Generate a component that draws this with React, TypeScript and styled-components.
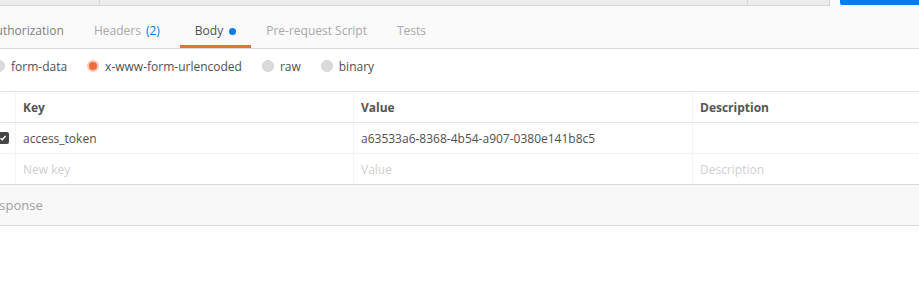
import * as React from 'react'
import styled, { createGlobalStyle } from 'styled-components'

const GlobalStyle = createGlobalStyle`
  html, body {
    margin: 0;
    padding: 0;
    background: #ffffff;
    overflow: hidden;
  }
  body {
    font-family: "Open Sans", "Liberation Sans", sans-serif;
    font-size: 12px;
    color: #505050;
  }
`

const Page = styled.div`
  width: 940px;
  margin-left: -10px;
`

const UrlStrip = styled.div`
  display: flex;
  height: 6px;
  background: #fafafa;
`

const UrlPart = styled.div<{ $width?: number }>`
  ${(p) => (p.$width ? `width: ${p.$width}px;` : 'flex: 1;')}
  height: 5px;
  background: #ececec;
  border-bottom: 1px solid #d6d6d6;
  border-right: 1px solid #d6d6d6;
`

const SendButton = styled.div`
  width: 90px;
  height: 5px;
  margin-left: 10px;
  background: #097bed;
  border-radius: 0 0 2px 2px;
`

const TabBar = styled.div`
  display: flex;
  height: 42px;
  background: #fafafa;
  border-bottom: 1px solid #dcdcdc;
`

const Tabs = styled.div`
  display: flex;
  margin-left: -17px;
`

const Tab = styled.div<{ $active?: boolean; $muted?: boolean }>`
  display: flex;
  align-items: center;
  padding: 16px 15px 5px;
  line-height: 18px;
  font-size: 12px;
  color: ${(p) => (p.$active ? '#505050' : p.$muted ? '#808080' : '#a8a8a8')};
  border-bottom: 3px solid ${(p) => (p.$active ? '#f26b3a' : 'transparent')};
`

const Count = styled.span`
  margin-left: 5px;
  margin-right: 5px;
  color: #097bed;
`

const Dot = styled.span`
  width: 7px;
  height: 7px;
  margin-left: 6px;
  border-radius: 50%;
  background: #097bed;
`

const ModeRow = styled.div`
  display: flex;
  align-items: center;
  padding: 9px 0 15px 3px;
  line-height: 18px;
`

const Mode = styled.label`
  display: flex;
  align-items: center;
  margin-right: 20px;
  font-size: 12px;
  color: #505050;
`

const Radio = styled.span<{ $checked?: boolean }>`
  box-sizing: border-box;
  width: 12px;
  height: 12px;
  margin-right: 6px;
  margin-top: -2px;
  border-radius: 50%;
  background: ${(p) => (p.$checked ? '#f26b3a' : '#dadada')};
  border: ${(p) => (p.$checked ? '2px solid #f7c9b6' : '1px solid #d4d4d4')};
`

const Table = styled.div`
  border-top: 1px solid #e2e2e2;
  border-bottom: 1px solid #dadada;
`

const Row = styled.div<{ $head?: boolean; $last?: boolean }>`
  display: grid;
  grid-template-columns: 25px 338px 339px 1fr;
  height: 30px;
  border-bottom: ${(p) =>
    p.$last ? 'none' : `1px solid ${p.$head ? '#e6e6e6' : '#f2f2f2'}`};
`

const Cell = styled.div<{ $head?: boolean; $placeholder?: boolean }>`
  display: flex;
  align-items: center;
  padding-left: 7px;
  border-left: 1px solid #f3f3f3;
  font-size: 12px;
  font-weight: ${(p) => (p.$head ? 700 : 400)};
  color: ${(p) => (p.$placeholder ? '#cfcfcf' : p.$head ? '#555555' : '#505050')};
`

const CheckCell = styled.div`
  display: flex;
  align-items: center;
  justify-content: flex-end;
  padding-right: 6px;
`

const Checkbox = styled.span`
  display: flex;
  align-items: center;
  justify-content: center;
  width: 12px;
  height: 12px;
  border-radius: 2px;
  background: #464646;
`

const ResponseBar = styled.div`
  display: flex;
  align-items: center;
  height: 40px;
  background: #f8f8f8;
  border-bottom: 1px solid #dcdcdc;
`

const ResponseLabel = styled.span`
  margin-left: -6px;
  font-size: 13px;
  color: #a0a0a0;
`

export default function App() {
  return (
    <Page>
      <GlobalStyle />
      <UrlStrip>
        <UrlPart $width={109} />
        <UrlPart />
        <UrlPart $width={81} />
        <SendButton />
      </UrlStrip>
      <TabBar>
        <Tabs>
          <Tab $muted>Authorization</Tab>
          <Tab>
            Headers<Count>(2)</Count>
          </Tab>
          <Tab $active>
            Body<Dot />
          </Tab>
          <Tab>Pre-request Script</Tab>
          <Tab>Tests</Tab>
        </Tabs>
      </TabBar>
      <ModeRow>
        <Mode>
          <Radio />
          form-data
        </Mode>
        <Mode>
          <Radio $checked />
          x-www-form-urlencoded
        </Mode>
        <Mode>
          <Radio />
          raw
        </Mode>
        <Mode>
          <Radio />
          binary
        </Mode>
      </ModeRow>
      <Table>
        <Row $head>
          <CheckCell />
          <Cell $head>Key</Cell>
          <Cell $head>Value</Cell>
          <Cell $head>Description</Cell>
        </Row>
        <Row>
          <CheckCell>
            <Checkbox>
              <svg width="8" height="8" viewBox="0 0 8 8">
                <path d="M1.5 4.2 L3.2 5.8 L6.6 2" stroke="#fff" strokeWidth="1.4" fill="none" />
              </svg>
            </Checkbox>
          </CheckCell>
          <Cell>access_token</Cell>
          <Cell>a63533a6-8368-4b54-a907-0380e141b8c5</Cell>
          <Cell />
        </Row>
        <Row $last>
          <CheckCell />
          <Cell $placeholder>New key</Cell>
          <Cell $placeholder>Value</Cell>
          <Cell $placeholder>Description</Cell>
        </Row>
      </Table>
      <ResponseBar>
        <ResponseLabel>Response</ResponseLabel>
      </ResponseBar>
    </Page>
  )
}
